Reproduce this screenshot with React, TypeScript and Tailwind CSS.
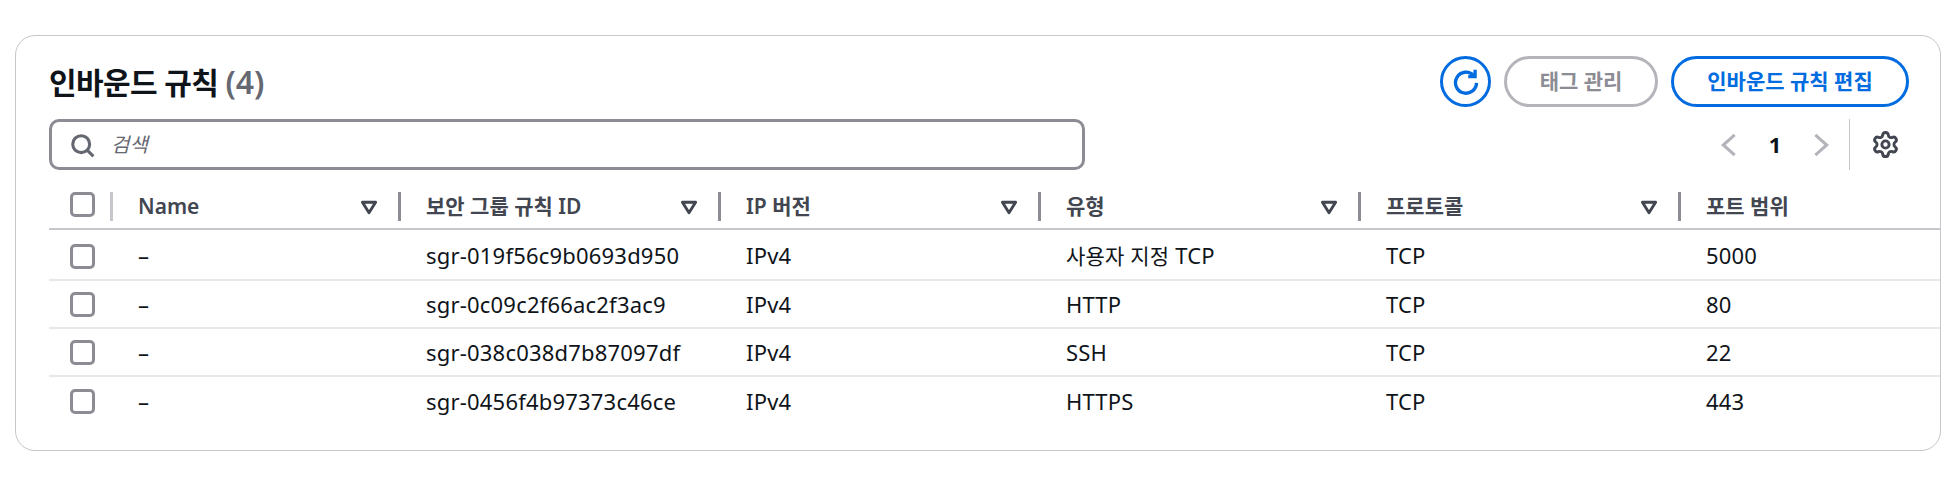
import React from "react";
import { Settings } from "lucide-react";

const font = "font-['Noto_Sans','Noto_Sans_CJK_KR',sans-serif]";

function Check() {
  return <span className="block w-[25px] h-[25px] rounded-[5px] border-[3px] border-[#8c8c94] bg-white" />;
}

function Caret() {
  return (
    <svg width="22" height="22" viewBox="0 0 16 16" className="block" fill="none" stroke="#424650" strokeWidth="2.100" strokeLinejoin="round">
      <path d="M3.200 4.500h9.600L8 12.200z" />
    </svg>
  );
}

const cols = "grid grid-cols-[61px_288px_320px_320px_320px_320px_1fr]";

const headers = ["Name", "보안 그룹 규칙 ID", "IP 버전", "유형", "프로토콜", "포트 범위"];

const rows: React.ReactNode[][] = [
  [
    "–",
    "sgr-019f56c9b0693d950",
    "IPv4",
    <>
      <span className="text-[21px]">사용자 지정</span> TCP
    </>,
    "TCP",
    "5000",
  ],
  ["–", "sgr-0c09c2f66ac2f3ac9", "IPv4", "HTTP", "TCP", "80"],
  ["–", "sgr-038c038d7b87097df", "IPv4", "SSH", "TCP", "22"],
  ["–", "sgr-0456f4b97373c46ce", "IPv4", "HTTPS", "TCP", "443"],
];

export default function App() {
  return (
    <div className={`${font} w-[1956px] h-[492px] bg-white pt-[35px] pl-[15px] pr-[15px] overflow-hidden text-[#0f141a]`}>
      <div className="h-[416px] rounded-[20px] border border-[#c6c6cd] pl-[33px] pt-[20px] overflow-hidden">
        {/* Title row */}
        <div className="flex items-center justify-between h-[51px] pr-[31px]">
          <h1 className="text-[30px] font-bold tracking-[-0.6px] leading-none">
            인바운드 규칙 <span className="text-[32px] font-semibold tracking-normal text-[#656871]">(4)</span>
          </h1>
          <div className="flex items-center">
            <button className="w-[51px] h-[51px] rounded-full border-[3px] border-[#006ce0] flex items-center justify-center">
              <svg width="28" height="28" viewBox="0 0 16 16" fill="none" stroke="#006ce0" strokeWidth="1.900">
                <path d="M14 8.500A6 6 0 1 1 12.300 4.200" />
                <path d="M13.200 1v3.900H9.300" />
              </svg>
            </button>
            <button className="ml-[13px] w-[154px] h-[51px] rounded-full border-[3px] border-[#b4b4bb] text-[#8c8c94] text-[21px] font-bold flex items-center justify-center">
              태그 관리
            </button>
            <button className="ml-[13px] w-[238px] h-[51px] rounded-full border-[3px] border-[#006ce0] text-[#006ce0] text-[21px] font-bold flex items-center justify-center">
              인바운드 규칙 편집
            </button>
          </div>
        </div>
        {/* Search row */}
        <div className="flex items-center mt-[12px] h-[51px] pr-[31px]">
          <div className="w-[1036px] h-[51px] rounded-[10px] border-[3px] border-[#8c8c94] flex items-center pl-[17px]">
            <svg width="26" height="26" viewBox="0 0 16 16" fill="none" stroke="#656871" strokeWidth="1.900">
              <circle cx="7.500" cy="7.500" r="5.200" />
              <path d="M11.200 11.200 15 15" />
            </svg>
            <span className="ml-[16px] italic text-[20px] text-[#656871]">검색</span>
          </div>
          <div className="ml-auto flex items-center h-[51px]">
            <svg width="26" height="26" viewBox="0 0 16 16" fill="none" stroke="#b4b4bb" strokeWidth="1.900">
              <path d="M11.500 1.800 4.500 8l7 6.200" />
            </svg>
            <span className="w-[66px] text-center text-[22px] font-bold">1</span>
            <svg width="26" height="26" viewBox="0 0 16 16" fill="none" stroke="#b4b4bb" strokeWidth="1.900">
              <path d="M4.500 1.800 11.500 8l-7 6.200" />
            </svg>
            <span className="ml-[15px] w-px h-[51px] bg-[#c6c6cd]" />
            <Settings className="ml-[21px] mr-[9px]" size={29} color="#424650" strokeWidth={2.400} />
          </div>
        </div>
        {/* Table header */}
        <div className={`${cols} mt-[22px] h-[38px] border-b-2 border-[#c6c6cd] items-start`}>
          <div className="h-[25px] flex items-center pl-[21px]">
            <Check />
          </div>
          {headers.map((h, i) => (
            <div key={h} className="relative h-[29px] flex items-center">
              <span className={`block w-[3px] h-[29px] shrink-0 ${i === 0 ? "bg-[#c6c6cd]" : "bg-[#8c8c94]"}`} />
              <span className="ml-[25px] text-[21px] font-semibold text-[#424650] leading-none">{h}</span>
              {i < 5 && (
                <span className="absolute right-[18px] top-[4px]">
                  <Caret />
                </span>
              )}
            </div>
          ))}
        </div>
        {/* Rows */}
        {rows.map((r, i) => (
          <div
            key={i}
            className={`${cols} items-center text-[22px] tracking-[0.2px] ${i === 0 ? "h-[51px] pt-[3px]" : "h-[48px]"} ${i < 3 ? "border-b-2 border-[#e8e8ea]" : ""}`}
          >
            <div className="pl-[21px]">
              <Check />
            </div>
            {r.map((c, j) => (
              <div key={j} className={`pl-[28px] leading-none whitespace-nowrap ${i === 0 ? "-mt-[2px]" : "-mt-[1px]"}`}>
                {c}
              </div>
            ))}
          </div>
        ))}
      </div>
    </div>
  );
}
